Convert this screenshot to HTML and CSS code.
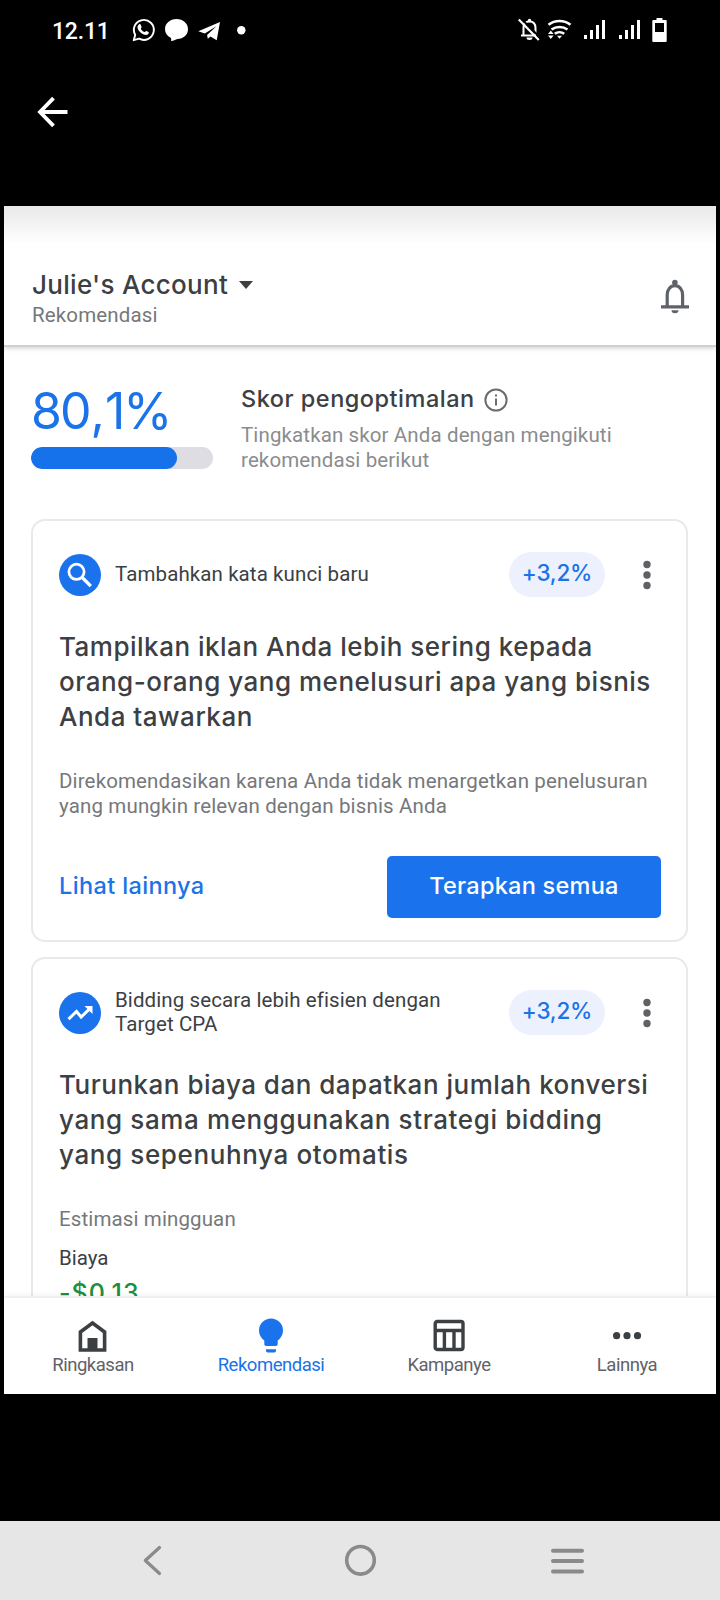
FILE: index.html
```html
<!DOCTYPE html>
<html lang="id">
<head>
<meta charset="utf-8">
<title>Rekomendasi</title>
<link rel="stylesheet" href="styles.css">
</head>
<body>
<div class="phone">
  <div class="status">
    <span class="clock">12.11</span>
    <svg class="status-left" width="120" height="30" viewBox="128 15 120 30">
      <path d="M133.700 40.200l1.500-5.300a10 10 0 1 1 3.900 3.800z" fill="none" stroke="#fff" stroke-width="1.900" stroke-linejoin="round"/>
      <path d="M138.800 24.600c.8-.8 1.500-.6 1.800 0l1 2.300c.1.5-.9 1.300-.8 1.800.7 1.500 2 2.700 3.600 3.400.6.1 1.300-1.200 1.900-1.100l2.300 1.100c.5.300-.1 2-.8 2.500-1.700 1-4.200.2-6.300-1.300-2.400-1.800-4.500-4.900-3.900-7.100z" fill="#fff"/>
      <path d="M176.500 19c6.500 0 11.500 4.300 11.500 10.200s-4.800 9.500-10.500 9.700c-2.100.3-3.800 2-6.500 2.100.4-1.200.2-2.300-.3-3.200-3.500-1.800-5.700-4.700-5.700-8.600 0-5.900 5-10.200 11.500-10.200z" fill="#fff"/>
      <path d="M198.300 31.200L220 22l-3.300 18.200-6.200-3.700-2.700 2.300-.7-3.700 9.300-8.900-11.600 7.400z" fill="#fff"/>
      <circle cx="241.300" cy="30.300" r="4.200" fill="#fff"/>
    </svg>
    <svg class="status-right" width="154" height="30" viewBox="516 15 154 30" fill="#fff">
      <path d="M523.500 35V28c0-4 2.300-6.600 6-6.600s6 2.600 6 6.600v7M521 35.500h15" fill="none" stroke="#fff" stroke-width="2"/>
      <circle cx="529.500" cy="20.500" r="1.700"/>
      <path d="M526.500 37.500h6a3 2.500 0 0 1-6 0z"/>
      <path d="M520 17.500l20 20" stroke="#000" stroke-width="2"/>
      <path d="M518.800 19.500l20 20.500" stroke="#fff" stroke-width="2.200"/>
      <path d="M548.500 24.800c6.500-5 15.500-5 22 0M551.500 29.600c4.700-3.600 11.300-3.600 16 0M554.800 33.800c2.700-2.200 6.700-2.200 9.400 0" fill="none" stroke="#fff" stroke-width="2.500"/>
      <path d="M557 35.800h5l-2.500 3zM548 34l2.800-3.500 2.800 3.500zM548 35.500h5.600l-2.800 3.500z"/>
      <path id="bars" d="M584 35h3v4h-3zM590 30h3v9h-3zM596 25h3v14h-3zM602 20h3v19h-3z"/>
      <use href="#bars" x="35"/>
      <path fill-rule="evenodd" d="M656.500 18h6v2h3.200q1 0 1 1v20q0 1-1 1h-12.400q-1 0-1-1v-20q0-1 1-1h3.200zM655 23v9h9v-9z"/>
    </svg>
  </div>
  <div class="topbar">
    <svg width="34" height="34" viewBox="36 95.500 34 34" fill="none" stroke="#fff" stroke-width="3.800">
      <path d="M67.500 112.500H40.500M53.500 98.600L40 112.500l13.500 13.900"/>
    </svg>
  </div>

  <main class="app">
    <header class="header">
      <div>
        <div class="account"><span class="account-name">Julie's Account</span><i class="caret"></i></div>
        <div class="account-sub">Rekomendasi</div>
      </div>
      <svg width="30" height="36" viewBox="660 278 30 36">
        <path d="M667.200 306V295c0-5.500 3.300-9.300 7.700-9.300s7.700 3.800 7.700 9.300V306M661 306.800h28" fill="none" stroke="#5f6368" stroke-width="3.200"/>
        <circle cx="674.900" cy="282.500" r="2.800" fill="#5f6368"/>
        <path d="M671.500 310.300h7a3.500 3 0 0 1-7 0z" fill="#5f6368"/>
      </svg>
    </header>

    <div class="content">
      <section class="score">
        <div class="score-left">
          <div class="score-value"><span>80</span><span class="comma">,</span><span>1%</span></div>
          <div class="track"><div class="fill" style="width:80.1%"></div></div>
        </div>
        <div class="score-right">
          <div class="score-title"><span class="score-name">Skor pengoptimalan</span>
            <svg width="24" height="24" viewBox="0 0 24 24"><circle cx="12" cy="12" r="10.600" fill="none" stroke="#6a6d70" stroke-width="2"/><path d="M11 10.500h2v7h-2zM11 6.500h2v2h-2z" fill="#6a6d70"/></svg>
          </div>
          <p class="score-desc">Tingkatkan skor Anda dengan mengikuti<br>rekomendasi berikut</p>
        </div>
      </section>

      <article class="card">
        <div class="card-head">
          <svg width="42" height="42" viewBox="0 0 42 42"><circle cx="21" cy="21" r="21" fill="#1a73ec"/><circle cx="17.500" cy="17.800" r="7.600" fill="none" stroke="#fff" stroke-width="2.800"/><path d="M23 23.300l8.800 8.800" stroke="#fff" stroke-width="3.400"/></svg>
          <div class="label">Tambahkan kata kunci baru</div>
          <span class="pill">+3,2%</span>
          <svg class="kebab" width="10" height="30" viewBox="0 0 10 30" fill="#5f6164"><circle cx="5" cy="4.500" r="3.700"/><circle cx="5" cy="15" r="3.700"/><circle cx="5" cy="25.500" r="3.700"/></svg>
        </div>
        <h2 class="heading">Tampilkan iklan Anda lebih sering kepada<br>orang-orang yang menelusuri apa yang bisnis<br>Anda tawarkan</h2>
        <p class="desc">Direkomendasikan karena Anda tidak menargetkan penelusuran<br>yang mungkin relevan dengan bisnis Anda</p>
        <div class="actions">
          <a class="link">Lihat lainnya</a>
          <button class="button">Terapkan semua</button>
        </div>
      </article>

      <article class="card">
        <div class="card-head">
          <svg width="42" height="42" viewBox="0 0 42 42"><circle cx="21" cy="21" r="21" fill="#1a73ec"/><path d="M9.500 27.200l8-7.700 4.600 5.500 8.700-8.300" fill="none" stroke="#fff" stroke-width="3"/><path d="M25.500 14h8v8z" fill="#fff"/></svg>
          <div class="label">Bidding secara lebih efisien dengan<br>Target CPA</div>
          <span class="pill">+3,2%</span>
          <svg class="kebab" width="10" height="30" viewBox="0 0 10 30" fill="#5f6164"><circle cx="5" cy="4.500" r="3.700"/><circle cx="5" cy="15" r="3.700"/><circle cx="5" cy="25.500" r="3.700"/></svg>
        </div>
        <h2 class="heading">Turunkan biaya dan dapatkan jumlah konversi<br><span class="wider">yang sama menggunakan strategi bidding</span><br><span class="wider">yang sepenuhnya otomatis</span></h2>
        <div class="estimate">Estimasi mingguan</div>
        <div class="cost-label">Biaya</div>
        <div class="cost">-$0,13</div>
      </article>
    </div>

    <nav class="tabs">
      <div class="tab">
        <svg width="36" height="36" viewBox="0 0 36 36"><path d="M5.400 33V15L17.500 6l12.100 9v18z" fill="none" stroke="#3c4043" stroke-width="3.600"/><path d="M12.500 21h10v12h-10z" fill="#3c4043"/></svg>
        <span>Ringkasan</span>
      </div>
      <div class="tab active">
        <svg width="36" height="36" viewBox="0 0 36 36" fill="#1a73ec"><path d="M18 1.500a12 12 0 0 1 12 12c0 4.500-2.300 7.800-5.300 10v3.700q0 1.800-1.800 1.800h-9.800q-1.800 0-1.800-1.800v-3.700c-3-2.200-5.300-5.500-5.300-10a12 12 0 0 1 12-12z"/><path d="M13 32.300h10v1.500q0 1.700-1.700 1.700h-6.600q-1.700 0-1.700-1.700z"/></svg>
        <span>Rekomendasi</span>
      </div>
      <div class="tab">
        <svg width="36" height="36" viewBox="0 0 36 36" fill="none" stroke="#3c4043" stroke-width="3.400"><rect x="4.200" y="4.500" width="27.800" height="28" rx="2"/><path d="M4 13.500h28M13.400 13.500v19M23 13.500v19"/></svg>
        <span>Kampanye</span>
      </div>
      <div class="tab">
        <svg width="36" height="36" viewBox="0 0 36 36" fill="#3c4043"><circle cx="7.600" cy="18.700" r="3.600"/><circle cx="18" cy="18.700" r="3.600"/><circle cx="28.500" cy="18.700" r="3.600"/></svg>
        <span>Lainnya</span>
      </div>
    </nav>
  </main>

  <div class="sysnav">
    <svg width="34" height="34" viewBox="0 0 34 34"><path d="M24.500 4.500L10.300 17.500 24.500 30.500" fill="none" stroke="#8a8a8a" stroke-width="3.200" stroke-linecap="round" stroke-linejoin="round"/></svg>
    <svg width="34" height="34" viewBox="0 0 34 34"><circle cx="17.500" cy="17.300" r="13.800" fill="none" stroke="#8a8a8a" stroke-width="3.600"/></svg>
    <svg width="34" height="34" viewBox="0 0 34 34"><path d="M3 7.800h29M3 18.100h29M3 28.500h29" stroke="#8a8a8a" stroke-width="4" stroke-linecap="round"/></svg>
  </div>
</div>
</body>
</html>
```
FILE: styles.css
```css
* { box-sizing: border-box; }
body { margin: 0; background: #000; font-family: Roboto, "Liberation Sans", sans-serif; }
p, h2 { margin: 0; }
svg { display: block; flex: none; }
span { white-space: nowrap; }

.phone { width: 720px; height: 1600px; display: flex; flex-direction: column; overflow: hidden; background: #000; }

.status { height: 60px; padding: 0 50px 0 52px; display: flex; align-items: center; color: #fff; }
.clock { width: 76px; font-size: 23px; font-weight: 500; line-height: 30px; padding-top: 3px; letter-spacing: -.2px; }
.status-right { margin-left: auto; }
.topbar { height: 146px; padding: 35px 36px 0; }

.app { height: 1188px; margin: 0 4px; background: #fff; display: flex; flex-direction: column; overflow: hidden; }

.header { height: 141px; flex: none; padding: 64px 26px 0 28px; display: flex; justify-content: space-between;
  background: linear-gradient(#e9e9e9, #f4f4f4 20px, #fff 38px); border-bottom: 2px solid #cfd1d0;
  box-shadow: 0 1px 5px rgba(0,0,0,.2); }
.header > svg { margin-top: 8px; }
.account { display: flex; align-items: center; height: 30px; }
.account-name { font: 500 26px/30px Inter, sans-serif; color: #3c4043; letter-spacing: .3px; }
.caret { margin-left: 11px; border: 7px solid transparent; border-top: 8px solid #3c4043; border-bottom: 0; }
.account-sub { margin-top: 3px; font-size: 20.500px; line-height: 24px; color: #75787b; letter-spacing: .15px; }

.content { flex: 1; min-height: 0; overflow: hidden; padding: 37px 28px 0 27px; }
.score { display: flex; height: 135px; }
.score-left { width: 182px; flex: none; }
.score-value { display: flex; font: 400 50px/54px Inter, sans-serif; color: #1a73e8; letter-spacing: -2px; height: 58px; }
.comma { padding: 0 2px 0 1px; }
.track { height: 22px; margin-top: 5px; border-radius: 11px; background: #dddde3; overflow: hidden; }
.fill { height: 100%; border-radius: 11px; background: #1672ea; }
.score-right { margin-left: 28px; }
.score-title { display: flex; align-items: center; gap: 9px; height: 30px; }
.score-name { font: 500 23.500px/30px Inter, sans-serif; color: #3c4043; letter-spacing: .5px; }
.score-title svg { margin-top: 2px; }
.score-desc { margin-top: 9px; font-size: 20.500px; line-height: 25px; color: #8a8c8e; letter-spacing: .12px; white-space: nowrap; }

.card { height: 423px; margin-bottom: 15px; border: 2px solid #e9e9eb; border-radius: 14px; padding: 31px 25px 0 26px; }
.card-head { height: 45px; display: flex; align-items: center; }
.label { width: 394px; margin-left: 14px; font-size: 20.500px; line-height: 23.500px; color: #3c4043; letter-spacing: .1px; white-space: nowrap; }
.pill { width: 96px; height: 45px; border-radius: 23px; background: #edf1fd; color: #1a73e8; text-align: center; font: 500 22.500px/42px Inter, sans-serif; letter-spacing: -.2px; }
.kebab { margin-left: 37px; }
.heading { margin-top: 32px; font: 500 26px/35px Inter, sans-serif; color: #3c4043; white-space: nowrap; letter-spacing: .5px; }
.wider { letter-spacing: .62px; }
.desc { margin-top: 35px; font-size: 20.500px; line-height: 25px; color: #75787b; letter-spacing: .14px; white-space: nowrap; }
.actions { margin-top: 37px; height: 62px; display: flex; align-items: center; justify-content: space-between; }
.link { font: 500 23.500px/60px Inter, sans-serif; color: #1a73e8; padding-bottom: 2px; letter-spacing: .37px; }
.button { width: 274px; height: 62px; border: 0; border-radius: 5px; padding: 0 0 3px; background: #1a72ec; color: #fff; font: 500 23.500px/30px Inter, sans-serif; letter-spacing: .25px; }
.estimate { margin-top: 35px; font-size: 20.500px; line-height: 24px; color: #75787b; letter-spacing: .12px; }
.cost-label { margin-top: 15px; font-size: 20.500px; line-height: 24px; color: #3c4043; }
.cost { margin-top: 8px; font: 500 25px/30px Inter, sans-serif; color: #1e8e3e; letter-spacing: 1px; }

.tabs { height: 98px; flex: none; display: flex; background: #fff; border-top: 2px solid #f0f0f3; box-shadow: 0 -1px 6px rgba(60,40,90,.06); z-index: 1; }
.tab { flex: 1; display: flex; flex-direction: column; align-items: center; padding-top: 19px; font-size: 18.500px; line-height: 24px; color: #5f6368; letter-spacing: -.48px; }
.tab span { margin-top: 0; }
.tab.active { color: #1a73e8; }

.sysnav { height: 79px; margin-top: auto; background: #e6e6e6; display: flex; justify-content: space-between; padding: 22px 136px 0 135px; }
```
